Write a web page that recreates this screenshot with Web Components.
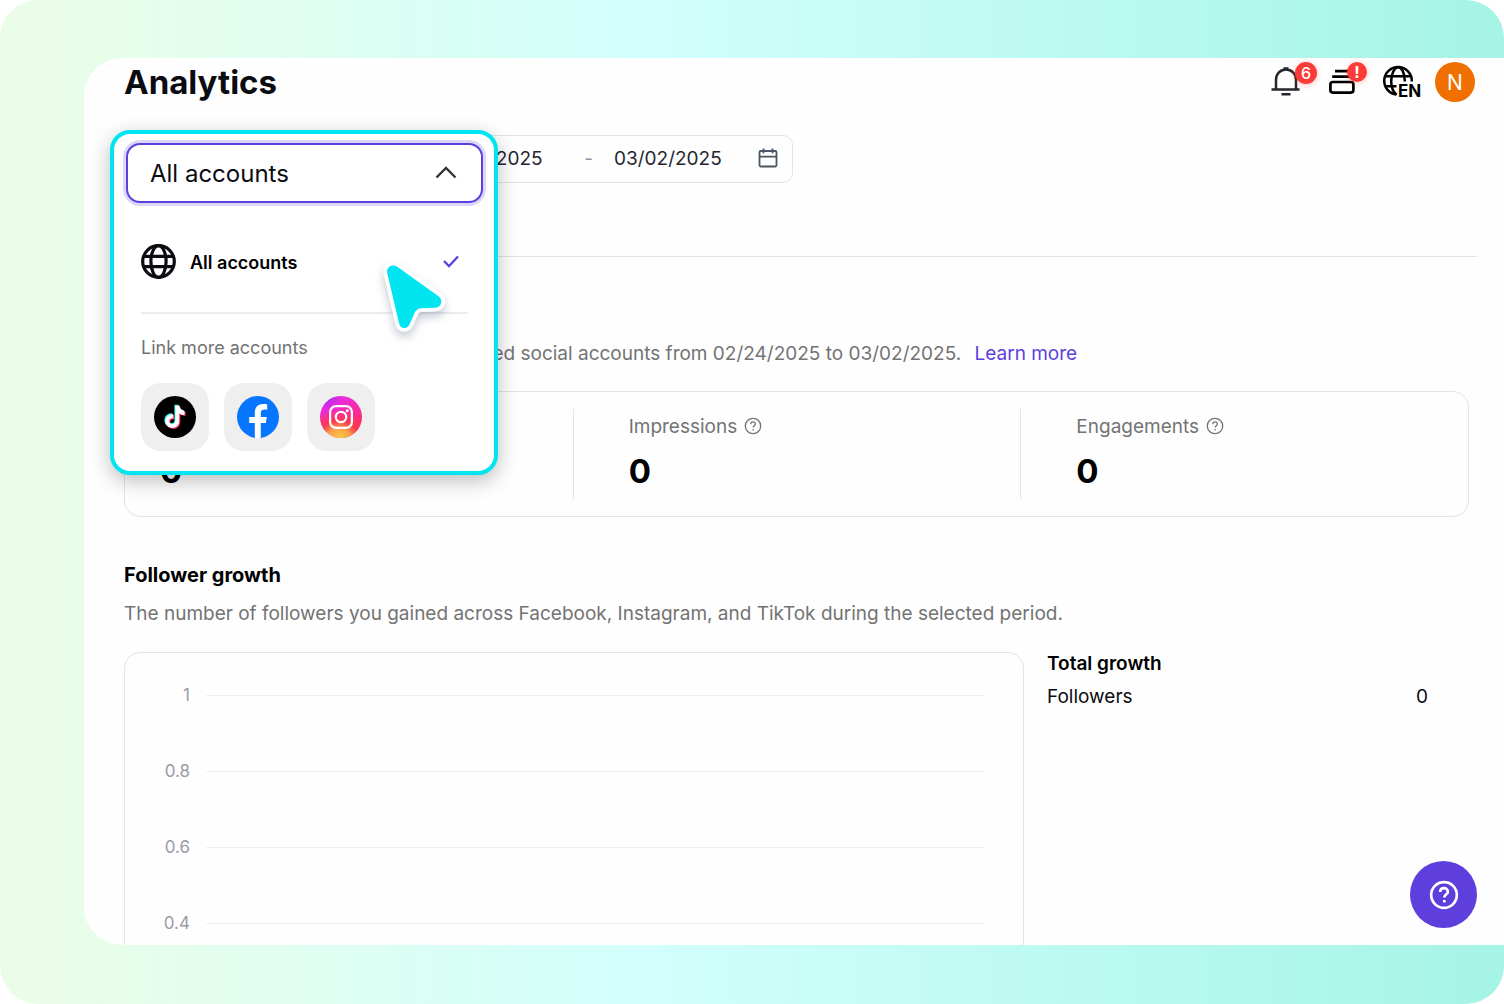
<!DOCTYPE html>
<html lang="en">
<head>
<meta charset="utf-8">
<meta name="viewport" content="width=device-width, initial-scale=1">
<title>Analytics</title>
<style>
  :root {
    --ink: #0b0b12;
    --muted: #737373;
    --line: #e4e4e6;
    --violet: #5e3fde;
    --cyan: #00e5f0;
    --red: #fb3b38;
  }
  * { box-sizing: border-box; }
  body {
    margin: 0;
    background: #fff;
    color: var(--ink);
    font-family: Inter, "Liberation Sans", sans-serif;
    font-size: 19px;
  }
</style>
</head>
<body>
<app-frame>
  <top-bar slot="header" heading="Analytics" alerts="6" initial="N"></top-bar>

  <filter-bar>
    <account-picker></account-picker>
    <date-range from="02/24/2025" to="03/02/2025"></date-range>
  </filter-bar>

  <overview-section>
    <metric-item value="0"></metric-item>
    <metric-item label="Impressions" value="0"></metric-item>
    <metric-item label="Engagements" value="0"></metric-item>
  </overview-section>

  <growth-section heading="Follower growth">
    <span slot="description">The number of followers you gained across Facebook, Instagram, and TikTok during the selected period.</span>
    <growth-chart slot="chart" ticks="1,0.8,0.6,0.4"></growth-chart>
    <growth-summary slot="summary" heading="Total growth" label="Followers" value="0"></growth-summary>
  </growth-section>

  <help-button slot="floating"></help-button>
</app-frame>

<script>
const helpIcon = `
  <svg viewBox="0 0 18 18" fill="none" stroke="currentColor" aria-hidden="true">
    <circle cx="9" cy="9" r="7.7" />
    <path d="M6.7 7.2c0-1.4 1-2.3 2.3-2.3s2.3.9 2.3 2.1c0 1.7-2.1 1.8-2.1 3.5" />
    <path d="M9.2 12v1.5" />
  </svg>`;

class AppFrame extends HTMLElement {
  connectedCallback() {
    const shadow = this.attachShadow({ mode: "open" });
    shadow.innerHTML = `
      <style>
        :host {
          display: flex;
          box-sizing: border-box;
          height: 100vh;
          padding: 58px 0 59px 84px;
          border-radius: 38px;
          overflow: hidden;
          background: linear-gradient(90deg, #ebfde7 0%, #d2fffc 43%, #a5f4e5 100%);
        }
        .panel {
          position: relative;
          flex: 1;
          min-width: 0;
          overflow: hidden;
          border-radius: 38px 0 0 38px;
          background: #fefefe;
        }
        main { padding: 29px 27px 0 40px; }
      </style>
      <div class="panel">
        <slot name="header"></slot>
        <main><slot></slot></main>
        <slot name="floating"></slot>
      </div>
    `;
  }
}

class TopBar extends HTMLElement {
  connectedCallback() {
    const shadow = this.attachShadow({ mode: "open" });
    shadow.innerHTML = `
      <style>
        :host {
          display: flex;
          align-items: center;
          justify-content: space-between;
          height: 48px;
          padding: 0 29px 0 40px;
        }
        h1 {
          margin: 0;
          font-size: 33px;
          line-height: 40px;
          font-weight: 700;
        }
        nav { display: flex; align-items: center; }
        button {
          position: relative;
          height: 40px;
          padding: 0;
          border: none;
          background: none;
          font: inherit;
          cursor: pointer;
        }
        svg { display: block; overflow: visible; }
        text { font-size: 17px; font-weight: 700; }
        .alerts { margin-right: 12px; }
        .tasks { margin-right: 16px; }
        .language { margin-right: 12px; }
        .badge {
          position: absolute;
          right: 0;
          top: 0;
          width: 22px;
          height: 22px;
          border-radius: 50%;
          background: var(--red);
          box-shadow: 0 1px 6px rgba(251, 56, 56, 0.3);
          color: #fff;
          font-size: 16px;
          line-height: 22px;
          font-weight: 500;
          text-align: center;
        }
        .tasks .badge {
          width: 20px;
          height: 20px;
          line-height: 20px;
          font-weight: 700;
        }
        .avatar {
          width: 40px;
          border-radius: 50%;
          background: #ef7000;
          color: #fff;
          font-size: 21px;
        }
      </style>
      <h1>${this.getAttribute("heading")}</h1>
      <nav aria-label="Account">
        <button class="alerts" aria-label="Notifications">
          <svg width="46" height="40" viewBox="0 0 46 40" fill="none" stroke="#26262e" stroke-width="2.500">
            <path d="M5 27V17.5A10 10 0 0 1 25 17.5V27M.5 27.500h28M10.500 32.300h9M12.500 6.600h5" />
          </svg>
          <span class="badge">${this.getAttribute("alerts")}</span>
        </button>
        <button class="tasks" aria-label="Tasks">
          <svg width="38" height="40" viewBox="0 0 38 40" fill="none" stroke="#000" stroke-width="2.700">
            <rect x="1.400" y="20" width="23" height="10.600" rx="2.500" />
            <path d="M3.200 14.700h19.500M6 9.200h13" />
          </svg>
          <span class="badge">!</span>
        </button>
        <button class="language" aria-label="Language">
          <svg width="40" height="40" viewBox="0 0 40 40" fill="none" stroke="#000" stroke-width="2.500">
            <path d="M13.500 32.600A13.800 13.800 0 1 1 28.800 19.500" />
            <path d="M13.500 32.600C10.300 30 8.200 25 8.200 19S11.200 5.200 15 5.200S21.800 11 21.800 19.500M2.500 14.300h25M2.500 24.300h11" />
            <text x="15" y="35" fill="#000" stroke="none">EN</text>
          </svg>
        </button>
        <button class="avatar" aria-label="Profile">${this.getAttribute("initial")}</button>
      </nav>
    `;
  }
}

class FilterBar extends HTMLElement {
  connectedCallback() {
    const shadow = this.attachShadow({ mode: "open" });
    shadow.innerHTML = `
      <style>
        :host {
          display: flex;
          gap: 16px;
          padding-bottom: 73px;
          border-bottom: 1px solid var(--line);
        }
      </style>
      <slot></slot>
    `;
  }
}

class DateRange extends HTMLElement {
  connectedCallback() {
    const shadow = this.attachShadow({ mode: "open" });
    shadow.innerHTML = `
      <style>
        :host {
          display: flex;
          align-items: center;
          box-sizing: border-box;
          width: 379px;
          height: 48px;
          padding: 0 14px 2px 20px;
          border: 1px solid var(--line);
          border-radius: 10px;
          color: #23262f;
        }
        input {
          width: 112px;
          padding: 0;
          border: none;
          outline: none;
          background: none;
          color: inherit;
          font: inherit;
        }
        .dash { flex: 1; padding-left: 16px; text-align: center; color: #8a94a3; }
        button {
          margin-left: 32px;
          padding: 0;
          border: none;
          background: none;
        }
        svg { display: block; }
      </style>
      <input type="text" aria-label="Start date" value="${this.getAttribute("from")}">
      <span class="dash">-</span>
      <input type="text" aria-label="End date" value="${this.getAttribute("to")}">
      <button aria-label="Open calendar">
        <svg width="20" height="20" viewBox="0 0 20 20" fill="none" stroke="#4b5563" stroke-width="1.800">
          <rect x="1.500" y="3" width="17" height="15.500" rx="1.200" />
          <path d="M1.500 8.600h17M5.500 .6v4.600M14.500 .6v4.600" />
        </svg>
      </button>
    `;
  }
}

class AccountPicker extends HTMLElement {
  connectedCallback() {
    const shadow = this.attachShadow({ mode: "open" });
    shadow.innerHTML = `
      <style>
        :host {
          display: block;
          position: relative;
          width: 274px;
          height: 48px;
          z-index: 10;
        }
        .popup {
          position: absolute;
          left: -14px;
          top: -5px;
          box-sizing: border-box;
          width: 388px;
          padding: 9px 11px 20px 12px;
          border: 4px solid var(--cyan);
          border-radius: 20px;
          background: #fff;
          box-shadow: 0 6px 20px rgba(0, 0, 0, 0.26);
        }
        .field { display: grid; align-items: center; }
        .field > * { grid-area: 1 / 1; }
        select {
          appearance: none;
          box-sizing: border-box;
          width: 100%;
          height: 60px;
          padding: 0 22px;
          border: 2px solid var(--violet);
          border-radius: 14px;
          outline: none;
          box-shadow: 0 0 0 3px #dcd6f8;
          background: #fff;
          color: var(--ink);
          font: inherit;
          font-size: 24px;
        }
        .chevron {
          justify-self: end;
          margin: 0 26px 3px 0;
          pointer-events: none;
        }
        .list { padding: 24px 15px 0; }
        .option {
          display: flex;
          align-items: center;
          gap: 14px;
          width: 100%;
          height: 68px;
          padding: 0 8px 0 0;
          border: none;
          background: none;
          color: #000;
          font: inherit;
          font-size: 18px;
          font-weight: 600;
          text-align: left;
        }
        .option span { flex: 1; padding-top: 2px; }
        hr {
          margin: 17px 0 22px;
          border: none;
          border-top: 2px solid #ececef;
        }
        p {
          margin: 0;
          color: var(--muted);
          font-size: 18px;
          line-height: 24px;
        }
        .socials { display: flex; gap: 15px; margin-top: 23px; }
        .socials button {
          width: 68px;
          height: 68px;
          padding: 13px;
          border: none;
          border-radius: 20px;
          background: #efefef;
        }
        svg { display: block; }
        .cursor {
          position: absolute;
          left: 266px;
          top: 124px;
          overflow: visible;
          filter: drop-shadow(0 5px 5px rgba(40, 60, 100, 0.28));
        }
      </style>
      <div class="popup">
        <div class="field">
          <select aria-label="Accounts"><option>All accounts</option></select>
          <svg class="chevron" width="22" height="14" viewBox="0 0 22 14" fill="none" stroke="#333" stroke-width="2.400">
            <path d="M1.500 12.500L11 3l9.500 9.500" />
          </svg>
        </div>
        <div class="list">
          <button class="option" aria-pressed="true">
            <svg width="35" height="35" viewBox="0 0 35 35" fill="none" stroke="#0b0b12" stroke-width="3.200">
              <circle cx="17.500" cy="17.500" r="15.800" />
              <ellipse cx="17.500" cy="17.500" rx="7.600" ry="15.800" />
              <path d="M2.500 12.300h30M2.500 22.700h30" />
            </svg>
            <span>All accounts</span>
            <svg width="18" height="14" viewBox="0 0 18 14" fill="none" stroke="#5e3fde" stroke-width="2.300">
              <path d="M2 7l5 5L16 2.500" />
            </svg>
          </button>
          <hr>
          <p>Link more accounts</p>
          <div class="socials">
            <button aria-label="TikTok">
              <svg width="42" height="42" viewBox="0 0 42 42">
                <defs>
                  <path id="note" d="M21.300 9.500h4c.3 3 2.200 5 5.200 5.400v4.100c-2 0-3.700-.6-5.200-1.600v7.600c0 4-3 7-7 7s-7-3-7-6.900c0-4.200 3.500-7.400 7.900-6.900v4.200c-2-.6-3.900.7-3.900 2.700 0 1.600 1.300 2.900 3 2.900s3-1.200 3-3z" />
                </defs>
                <circle cx="21" cy="21" r="21" />
                <use href="#note" x="-0.9" y="-0.8" fill="#25f4ee" />
                <use href="#note" x="1" y="0.9" fill="#fe2c55" />
                <use href="#note" fill="#fff" />
              </svg>
            </button>
            <button aria-label="Facebook">
              <svg width="42" height="42" viewBox="0 0 42 42">
                <circle cx="21" cy="21" r="21" fill="#0776ff" />
                <path d="M17.800 41.800V27h-5.600v-6.100h5.600v-3.700c0-6.200 3-9.100 8.800-9.100 1.400 0 2.700.1 3.600.4v5.300c-.9-.1-1.700-.2-2.600-.2-2.700 0-3.800 1.100-3.800 3.800v3.500h6l-1 6.100h-5v14.700c-2 .3-4 .4-6 .1z" fill="#fff" />
              </svg>
            </button>
            <button aria-label="Instagram">
              <svg width="42" height="42" viewBox="0 0 42 42">
                <defs>
                  <radialGradient id="warm" cx="45%" cy="108%" r="75%">
                    <stop offset="0.1" stop-color="#f7cb45" />
                    <stop offset="0.4" stop-color="#f9a24a" />
                    <stop offset="0.65" stop-color="#fb3c50" />
                    <stop offset="1" stop-color="#fb3c50" stop-opacity="0" />
                  </radialGradient>
                  <radialGradient id="cool" cx="15%" cy="0%" r="50%">
                    <stop offset="0" stop-color="#8a2cff" />
                    <stop offset="1" stop-color="#f02cd8" stop-opacity="0" />
                  </radialGradient>
                  <linearGradient id="pink" x1="0.300" y1="0" x2="0.7" y2="1">
                    <stop offset="0.2" stop-color="#f12bd3" />
                    <stop offset="0.7" stop-color="#fb2d74" />
                  </linearGradient>
                </defs>
                <circle cx="21" cy="21" r="21" fill="url(#pink)" />
                <circle cx="21" cy="21" r="21" fill="url(#warm)" />
                <circle cx="21" cy="21" r="21" fill="url(#cool)" />
                <g fill="none" stroke="#fff" stroke-width="2.200">
                  <rect x="10.100" y="10.100" width="21.800" height="21.800" rx="6" />
                  <circle cx="21" cy="21" r="5.200" />
                </g>
                <circle cx="27.300" cy="14.800" r="1.500" fill="#fff" />
              </svg>
            </button>
          </div>
        </div>
        <svg class="cursor" width="70" height="80" viewBox="0 0 70 80">
          <path d="M7.300 15.300C6 9 12 5.500 17.300 8.800L58.500 38.300C63.500 42 61.500 49.400 55.500 49.700L41.500 50.200C38.500 50.300 36.500 51.500 35 54L29.500 66.500C27 71.800 20 71 19 65.300Z"
            fill="#00e5f0" stroke="#fff" stroke-width="7.500" stroke-linejoin="round" paint-order="stroke" />
        </svg>
      </div>
    `;
  }
}

class OverviewSection extends HTMLElement {
  connectedCallback() {
    const shadow = this.attachShadow({ mode: "open" });
    shadow.innerHTML = `
      <style>
        :host { display: block; padding: 84px 8px 0 0; }
        p {
          margin: 0 0 24px;
          padding-left: 338px;
          color: var(--muted);
          line-height: 26px;
        }
        a { margin-left: 8px; color: var(--violet); text-decoration: none; }
        .card {
          display: grid;
          grid-template-columns: repeat(3, 1fr);
          padding: 17px 0;
          border: 1px solid var(--line);
          border-radius: 16px;
        }
      </style>
      <p>linked social accounts from 02/24/2025 to 03/02/2025. <a href="#learn-more">Learn more</a></p>
      <div class="card"><slot></slot></div>
    `;
  }
}

class MetricItem extends HTMLElement {
  connectedCallback() {
    const label = this.getAttribute("label");
    const shadow = this.attachShadow({ mode: "open" });
    shadow.innerHTML = `
      <style>
        :host {
          display: block;
          height: 90px;
          padding-left: 55px;
          border-left: 1px solid var(--line);
          box-sizing: border-box;
        }
        :host(:first-child) { padding-left: 34px; border-left-color: transparent; }
        .label {
          display: flex;
          align-items: center;
          gap: 7px;
          height: 26px;
          padding-top: 4px;
          color: var(--muted);
        }
        .label svg { width: 18px; height: 18px; stroke-width: 1.300; }
        strong {
          display: block;
          margin-top: 12px;
          color: #000;
          font-size: 33px;
          line-height: 40px;
          font-weight: 700;
        }
      </style>
      <div class="label">${label ? label + helpIcon : ""}</div>
      <strong>${this.getAttribute("value")}</strong>
    `;
  }
}

class GrowthSection extends HTMLElement {
  connectedCallback() {
    const shadow = this.attachShadow({ mode: "open" });
    shadow.innerHTML = `
      <style>
        :host { display: block; padding: 45px 8px 0 0; }
        h2 {
          margin: 0;
          color: #000;
          font-size: 20px;
          line-height: 26px;
          font-weight: 700;
        }
        p { margin: 13px 0 25px; color: var(--muted); line-height: 26px; }
        .row { display: flex; align-items: flex-start; gap: 23px; }
      </style>
      <h2>${this.getAttribute("heading")}</h2>
      <p><slot name="description"></slot></p>
      <div class="row">
        <slot name="chart"></slot>
        <slot name="summary"></slot>
      </div>
    `;
  }
}

class GrowthChart extends HTMLElement {
  connectedCallback() {
    const rows = this.getAttribute("ticks").split(",")
      .map(tick => `<div class="tick"><span>${tick}</span><i></i></div>`)
      .join("");
    const shadow = this.attachShadow({ mode: "open" });
    shadow.innerHTML = `
      <style>
        :host {
          display: block;
          flex: 1;
          padding: 4px 39px 4px 0;
          border: 1px solid var(--line);
          border-radius: 16px;
        }
        .tick {
          display: flex;
          align-items: center;
          gap: 16px;
          height: 76px;
          color: #9a9aa8;
          font-size: 17px;
        }
        span { width: 65px; text-align: right; }
        i { flex: 1; height: 1px; background: #efeff1; }
      </style>
      ${rows}
    `;
  }
}

class GrowthSummary extends HTMLElement {
  connectedCallback() {
    const shadow = this.attachShadow({ mode: "open" });
    shadow.innerHTML = `
      <style>
        :host { display: block; width: 422px; padding-right: 41px; box-sizing: border-box; }
        table { width: 100%; margin-top: -1px; border-collapse: collapse; text-align: left; line-height: 26px; }
        caption { padding-bottom: 7px; color: #000; font-weight: 600; text-align: left; }
        th { padding: 0; font-weight: 400; }
        td { padding: 0; text-align: right; }
      </style>
      <table>
        <caption>${this.getAttribute("heading")}</caption>
        <tr><th scope="row">${this.getAttribute("label")}</th><td>${this.getAttribute("value")}</td></tr>
      </table>
    `;
  }
}

class HelpButton extends HTMLElement {
  connectedCallback() {
    const shadow = this.attachShadow({ mode: "open" });
    shadow.innerHTML = `
      <style>
        :host { position: absolute; right: 27px; bottom: 17px; }
        button {
          display: grid;
          place-items: center;
          width: 67px;
          height: 67px;
          padding: 0;
          border: none;
          border-radius: 50%;
          background: var(--violet);
          color: #fff;
          cursor: pointer;
        }
        svg { width: 30px; height: 30px; stroke-width: 1.600; }
      </style>
      <button aria-label="Help">${helpIcon}</button>
    `;
  }
}

customElements.define("app-frame", AppFrame);
customElements.define("top-bar", TopBar);
customElements.define("filter-bar", FilterBar);
customElements.define("date-range", DateRange);
customElements.define("account-picker", AccountPicker);
customElements.define("overview-section", OverviewSection);
customElements.define("metric-item", MetricItem);
customElements.define("growth-section", GrowthSection);
customElements.define("growth-chart", GrowthChart);
customElements.define("growth-summary", GrowthSummary);
customElements.define("help-button", HelpButton);
</script>
</body>
</html>
